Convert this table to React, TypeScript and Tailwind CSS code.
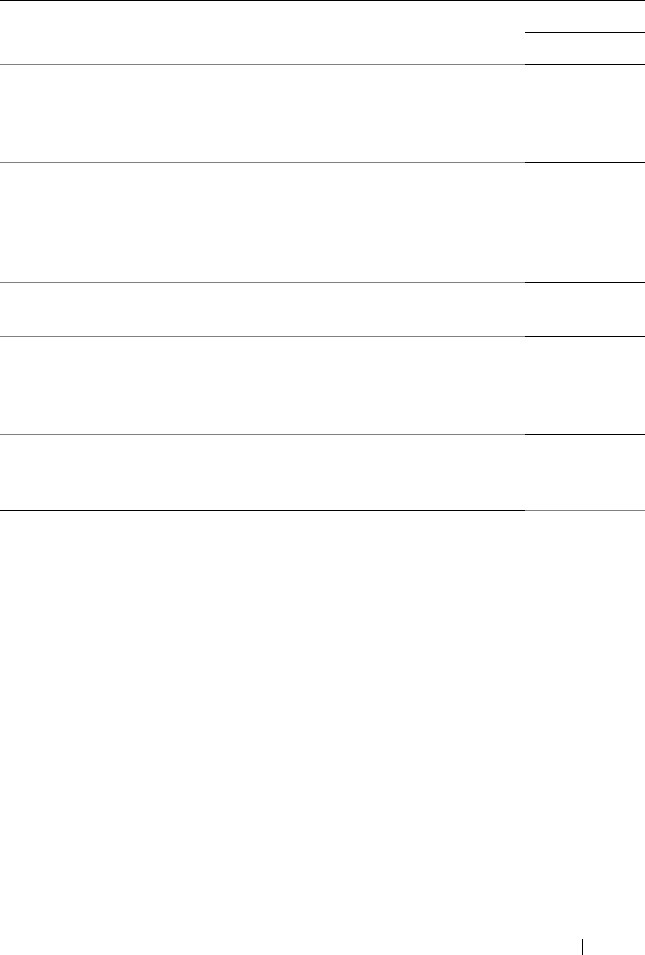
import React from "react";

const rows = [98, 120, 54, 98, 76];

export default function App() {
  return (
    <div className="w-[645px] h-[955px] bg-white overflow-hidden flex flex-col" style={{ fontFamily: '"Liberation Sans", Arial, sans-serif' }}>
      {/* Table */}
      <div className="flex flex-col border-t border-black">
        {/* Header row */}
        <div className="flex h-[63px]">
          <div className="w-[525px]" />
          <div className="flex-1 flex flex-col">
            <div className="h-[32px] border-b border-black" />
            <div className="flex-1" />
          </div>
        </div>
        {rows.map((h, i) => (
          <div key={i} className="flex" style={{ height: h }}>
            <div className="w-[525px] border-t border-[#808080]" />
            <div className="flex-1 border-t border-black" />
          </div>
        ))}
        <div className="flex">
          <div className="w-[525px] border-t border-black" />
          <div className="flex-1 border-t border-[#808080]" />
        </div>
      </div>
      {/* Footer */}
      <div className="flex-1 flex items-end">
        <div className="ml-[582px] w-px h-[16px] bg-black" />
      </div>
    </div>
  );
}
